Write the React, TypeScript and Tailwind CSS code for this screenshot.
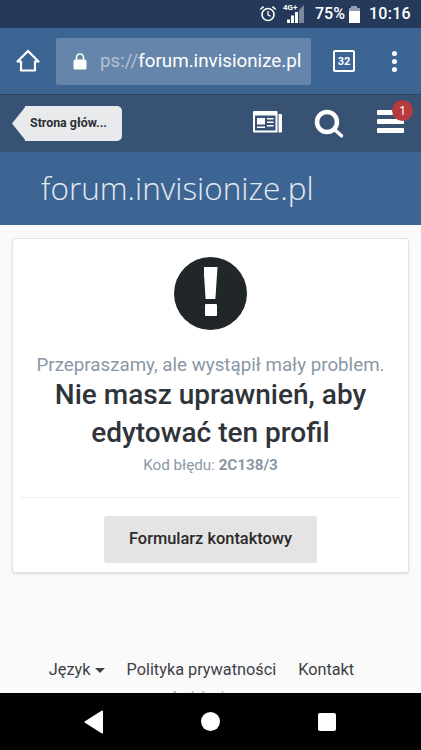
import React from "react";

function StatusBar() {
  return (
    <div className="flex h-[28px] shrink-0 items-center justify-end bg-[#253a5a] pr-[10px] text-white">
      <svg width="18" height="18" viewBox="0 0 18 18" fill="none" stroke="white" className="mr-[6px]">
        <circle cx="9" cy="9.500" r="6" strokeWidth="1.600" />
        <path d="M9 6v3.800l2.600 1.400" strokeWidth="1.300" />
        <path d="M1.200 4.500 4.600 1.600M16.800 4.500 13.400 1.600" strokeWidth="1.600" />
      </svg>
      <div className="relative mr-[10px] h-[20px] w-[22px]">
        <span className="absolute left-0 top-[-1px] text-[8px] font-bold leading-[10px]">4G+</span>
        <svg width="19" height="18" viewBox="0 0 19 18" fill="white" className="absolute bottom-[1px] left-[3px]">
          <path d="M1 18h3v-3.500H1zM5 18h3v-7.500H5zM9 18h3V7H9z" />
          <path d="M13 18h5V0l-5 5z" fillOpacity="0.4" />
        </svg>
      </div>
      <span className="mr-[4px] text-[16px] font-medium leading-none">75%</span>
      <div className="mr-[9px] flex flex-col items-center">
        <div className="h-[2px] w-[6px] bg-white/50" />
        <div className="flex h-[15px] w-[11px] flex-col bg-white/50">
          <div className="mt-[3px] flex-1 bg-white" />
        </div>
      </div>
      <span className="text-[16px] font-medium leading-none tracking-[0.3px]">10:16</span>
    </div>
  );
}

function BrowserBar() {
  return (
    <div className="flex h-[66px] shrink-0 items-center bg-[#3d6594] text-white">
      <div className="flex w-[56px] justify-center">
        <svg width="24" height="24" viewBox="0 0 24 24" fill="none" stroke="white" strokeWidth="2.200" strokeLinejoin="round">
          <path d="M1.500 12.500 12 2l10.500 10.500h-3.500v9H5v-9z" />
        </svg>
      </div>
      <div className="flex h-[47px] w-[255px] items-center overflow-hidden rounded-[2px] bg-[#6685aa] pl-[17px]">
        <svg width="14" height="17" viewBox="0 0 14 17" fill="white" className="mr-[13px] shrink-0">
          <path d="M3.500 7V4.500a3.500 3.500 0 0 1 7 0V7" fill="none" stroke="white" strokeWidth="1.600" />
          <rect x="0.500" y="6.500" width="13" height="10" rx="1.500" />
        </svg>
        <span className="whitespace-nowrap text-[18.800px] leading-none">
          <span className="text-white/50">ps://</span>forum.invisionize.pl
        </span>
      </div>
      <div className="ml-[22px] flex h-[22px] w-[22px] items-center justify-center rounded-[2px] border-2 border-white text-[11px] font-bold leading-none">
        32
      </div>
      <div className="ml-[37px] flex flex-col gap-[3px]">
        <div className="h-[5px] w-[5px] rounded-full bg-white" />
        <div className="h-[5px] w-[5px] rounded-full bg-white" />
        <div className="h-[5px] w-[5px] rounded-full bg-white" />
      </div>
    </div>
  );
}

function NavBar() {
  return (
    <div className="flex h-[58px] shrink-0 items-center border-t border-[#2f4661] bg-[#385274] text-white">
      <div className="relative ml-[25px] flex h-[35px] w-[97px] items-center rounded-r-[5px] bg-[#e9eaec] pl-[5px] text-[12.400px] font-bold leading-none text-[#2b2f35]">
        <div className="absolute left-[-13px] top-0 h-[35px] w-[14px] bg-[#e9eaec] [clip-path:polygon(100%_0,0_50%,100%_100%)]" />
        <span className="relative whitespace-nowrap">Strona głów...</span>
      </div>
      <svg width="29" height="22" viewBox="0 0 29 22" fill="white" className="mb-[4px] ml-[131px]">
        <path d="M1 0h22.500a1 1 0 0 1 1 1v20.500H1a1 1 0 0 1-1-1V1a1 1 0 0 1 1-1z" />
        <path d="M25.500 3H28a1 1 0 0 1 1 1v16.500a1 1 0 0 1-1 1h-2.500z" />
        <path d="M2 4.500h20.500V19.500H2z" fill="#385274" />
        <path d="M4 7h8v6.500H4zM14 7h6.500v1.500H14zM14 10.500h6.500V12H14zM14 14h6.500v1.500H14zM4 15.500h8V17H4z" />
      </svg>
      <svg width="30" height="30" viewBox="0 0 30 30" fill="none" stroke="white" className="ml-[32px]">
        <circle cx="13" cy="13" r="10" strokeWidth="4.500" />
        <path d="m21 21 6.500 5.800" strokeWidth="3.500" strokeLinecap="round" />
      </svg>
      <div className="relative mb-[4px] ml-[33px] flex w-[27px] flex-col gap-[4px]">
        <div className="h-[5px] rounded-[1px] bg-white" />
        <div className="h-[5px] rounded-[1px] bg-white" />
        <div className="h-[5px] rounded-[1px] bg-white" />
        <div className="absolute right-[-9px] top-[-10px] flex h-[21px] w-[21px] items-center justify-center rounded-full bg-[#b73a3e] text-[12px] leading-none">
          1
        </div>
      </div>
    </div>
  );
}

function ErrorCard() {
  return (
    <div className="mx-[12px] mt-[13px] flex h-[335px] shrink-0 flex-col items-center rounded-[3px] border border-[#e3e3e3] bg-white pt-[18px] shadow-[0_1px_2px_rgba(0,0,0,0.12)]">
      <div className="flex h-[73px] w-[73px] flex-col items-center justify-center rounded-full bg-[#212629] pb-[4px]">
        <div className="h-[32px] w-[14px] bg-white [clip-path:polygon(0_0,100%_0,85%_100%,15%_100%)]" />
        <div className="mt-[5px] h-[12px] w-[12px] rounded-[1px] bg-white" />
      </div>
      <p className="mt-[24px] whitespace-nowrap text-[18.750px] leading-[22px] text-[#8a97a6]">
        Przepraszamy, ale wystąpił mały problem.
      </p>
      <h1 className="w-[340px] text-center text-[28px] font-medium leading-[38px] text-[#2f343a]">
        Nie masz uprawnień, aby edytować ten profil
      </h1>
      <p className="mt-[4px] text-[15.200px] leading-[18px] text-[#8a97a6]">
        Kod błędu: <b className="font-bold">2C138/3</b>
      </p>
      <div className="mt-[23px] h-[1px] w-[379px] bg-[#eeeeee]" />
      <button
        type="button"
        className="mt-[18px] h-[47px] w-[213px] rounded-[3px] bg-[#e4e4e4] text-[16.400px] font-medium text-[#2a2a2a]"
      >
        Formularz kontaktowy
      </button>
    </div>
  );
}

function Footer() {
  return (
    <div className="mt-[85px] flex flex-col items-center pr-[18px] text-[16.300px] text-[#3c4146]">
      <div className="flex items-center">
        <span>Język</span>
        <div className="ml-[5px] h-0 w-0 border-x-[5px] border-t-[5px] border-x-transparent border-t-[#3c4146]" />
        <span className="ml-[21px]">Polityka prywatności</span>
        <span className="ml-[22px]">Kontakt</span>
      </div>
      <div className="mt-[5px] pl-[8px] text-[14px] text-[#8a97a6]">Invisionize</div>
    </div>
  );
}

export default function App() {
  return (
    <div className="flex h-[750px] w-[421px] flex-col overflow-hidden bg-[#fafafa] font-['Roboto',sans-serif]">
      <StatusBar />
      <BrowserBar />
      <div className="flex min-h-0 flex-1 flex-col overflow-hidden">
        <NavBar />
        <div className="flex h-[73px] shrink-0 items-center bg-[#3d6594] pb-[2px] pl-[41px]">
          <span className="font-['Open_Sans',sans-serif] text-[31.500px] font-light leading-none text-[#e4e9ef]">
            forum.invisionize.pl
          </span>
        </div>
        <ErrorCard />
        <Footer />
      </div>
      <div className="flex h-[57px] shrink-0 items-center bg-black">
        <svg width="20" height="24" viewBox="0 0 20 24" fill="white" className="ml-[84px]">
          <path d="M19 1.500v21a1 1 0 0 1-1.500.8L1 12.800a1 1 0 0 1 0-1.600L17.500.7A1 1 0 0 1 19 1.500z" />
        </svg>
        <div className="ml-[97px] h-[19px] w-[19px] rounded-full bg-white" />
        <div className="ml-[98px] h-[18px] w-[18px] rounded-[2px] bg-white" />
      </div>
    </div>
  );
}
